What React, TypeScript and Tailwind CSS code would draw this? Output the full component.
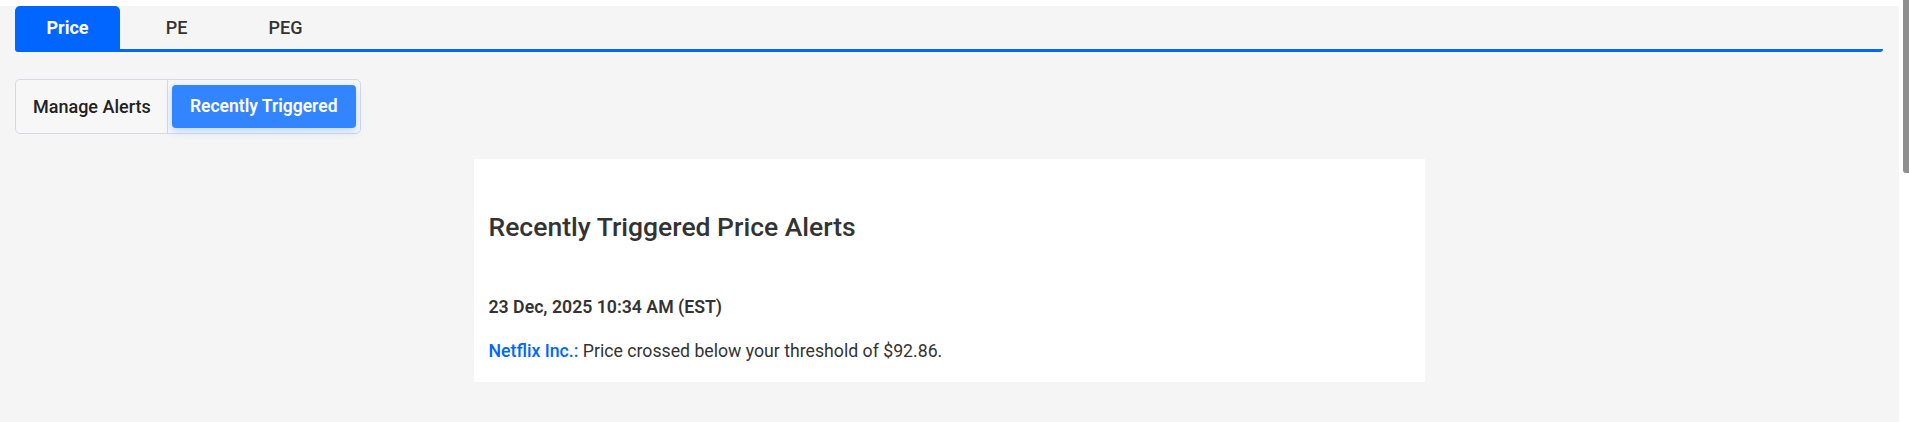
import React from "react";

export default function App() {
  return (
    <div className="flex h-[422px] bg-white" style={{ fontFamily: "Roboto, 'Liberation Sans', sans-serif" }}>
      <div className="flex-1 pt-[6px] overflow-hidden">
        <div className="h-full bg-[#f5f5f5] pl-[15px] pr-[16px]">
          {/* Tabs */}
          <div className="flex gap-[4px] border-b-[3px] border-[#0066ff] rounded-b-[3px]">
            <button className="w-[105px] h-[43px] bg-[#0066ff] rounded-t-[5px] text-white text-[18px] font-bold leading-none">
              Price
            </button>
            <button className="w-[105px] h-[43px] text-[#333333] text-[18px] font-medium leading-none">PE</button>
            <button className="w-[105px] h-[43px] text-[#333333] text-[18px] font-medium leading-none">PEG</button>
          </div>

          {/* Toggle */}
          <div className="mt-[27px] inline-flex h-[55px] items-stretch rounded-[5px] border border-[#d6d9df] bg-[#f7f7f8]">
            <button className="pl-[17px] pr-[16px] text-[18px] font-medium text-[#222222] border-r border-[#d6d9df]">
              Manage Alerts
            </button>
            <div className="flex items-center px-[4px]">
              <button className="h-[43px] w-[184px] rounded-[4px] bg-[#3385ff] text-[17.5px] font-semibold text-white shadow-[0_3px_8px_rgba(51,133,255,0.3)]">
                Recently Triggered
              </button>
            </div>
          </div>

          {/* Card */}
          <div className="mx-auto mt-[25px] w-[951px] bg-white px-[15px] pt-[52px] pb-[18px] text-[#333333]">
            <h2 className="text-[26.5px] font-medium leading-[31px]">Recently Triggered Price Alerts</h2>
            <div className="mt-[52px] text-[17.7px] font-semibold leading-[26px]">23 Dec, 2025 10:34 AM (EST)</div>
            <div className="mt-[18px] text-[17.7px] leading-[26px]">
              <span className="font-medium text-[#0066ff]">Netflix Inc.:</span> Price crossed below your threshold of $92.86.
            </div>
          </div>
        </div>
      </div>
      <div className="flex w-[10px] justify-end">
        <div className="h-[173px] w-[6px] rounded-bl-[3px] bg-[#8e8e8e]" />
      </div>
    </div>
  );
}
